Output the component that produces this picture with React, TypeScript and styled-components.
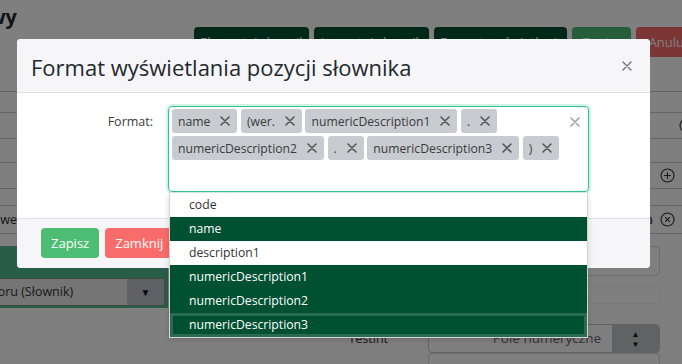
import React, { FunctionComponent, ReactElement } from 'react';
import styled, { createGlobalStyle } from 'styled-components';

const colors = {
  brand: '#005032',
  brandFocus: '#2b6b51',
  success: '#4dbd74',
  danger: '#f86c6b',
  focus: '#34c38f',
  text: '#23282c',
  line: '#c8ced3',
  tag: '#c8ccd1',
  header: '#f6f6f8',
  divider: '#dfe0e3'
};

const GlobalStyle = createGlobalStyle`
  *, *::before, *::after {
    box-sizing: border-box;
  }
  html, body {
    margin: 0;
    padding: 0;
    height: 100%;
    overflow: hidden;
    background: #ffffff;
  }
  body {
    font-family: "Open Sans", "Liberation Sans", sans-serif;
    font-size: 12.5px;
    color: ${colors.text};
  }
  #root {
    height: 100%;
  }
`;

type Tone = 'brand' | 'success' | 'danger';

const toneColor = (tone: Tone): string => {
  if (tone === 'success') {
    return colors.success;
  }
  if (tone === 'danger') {
    return colors.danger;
  }
  return colors.brand;
};

// ---------- page behind the dialog ----------

const Page = styled.div`
  width: 800px;
  margin-left: -60px;
  padding-right: 40px;
`;

const Header = styled.header`
  display: flex;
  align-items: flex-start;
  height: 57px;
  padding-top: 5px;
`;

const TitleSlot = styled.div`
  width: 77px;
  display: flex;
  justify-content: flex-end;
  white-space: nowrap;
`;

const PageTitle = styled.h2`
  margin: 0;
  font-size: 20px;
  font-weight: 700;
  line-height: 24px;
`;

const Toolbar = styled.div`
  display: flex;
  gap: 5px;
  margin-left: auto;
  margin-top: 22px;
`;

const PageButton = styled.button<{ $tone: Tone; $width: number }>`
  width: ${({ $width }): number => $width}px;
  height: 30px;
  border: 0;
  border-radius: 4px;
  background: ${({ $tone }): string => toneColor($tone)};
  color: #ffffff;
  font-family: "Open Sans", sans-serif;
  font-size: 13px;
  white-space: nowrap;
  overflow: hidden;
`;

const Table = styled.div`
  margin-top: 34px;
  border-bottom: 1px solid ${colors.line};
`;

const TableRow = styled.div<{ $height: number }>`
  display: grid;
  grid-template-columns: 77px 1fr 22px 16px;
  align-items: center;
  height: ${({ $height }): number => $height}px;
  padding-right: 6px;
  border-top: 1px solid ${colors.line};
`;

const RowLabel = styled.div`
  display: flex;
  justify-content: flex-end;
  white-space: nowrap;
`;

const RowValue = styled.div`
  text-align: right;
  white-space: nowrap;
  padding-right: 3px;
`;

const IconCell = styled.div`
  display: flex;
  justify-content: center;
  align-items: center;
`;

const Bottom = styled.div`
  display: flex;
  margin-top: 12px;
`;

const SidePanel = styled.div`
  width: 228px;
  height: 62px;
  padding: 32px 3px 2px 0;
  background: #50bc90;
`;

const TypeSelect = styled.div`
  display: flex;
  height: 28px;
  border: 1px solid #8c8c8c;
  border-radius: 4px;
  background: #ebebeb;
  overflow: hidden;
`;

const TypeSelectText = styled.div`
  flex: 1;
  padding-left: 9px;
  line-height: 26px;
  white-space: nowrap;
  color: #333333;
`;

const TypeSelectArrow = styled.div`
  width: 37px;
  display: flex;
  justify-content: center;
  align-items: center;
  background: #bfc3c8;
  font-size: 10px;
  color: #111111;
`;

const FieldColumn = styled.div`
  display: flex;
  flex-direction: column;
`;

const FieldLine = styled.div<{ $offset: number }>`
  display: grid;
  grid-template-columns: 220px 232px;
  column-gap: 40px;
  align-items: center;
  margin-top: ${({ $offset }): number => $offset}px;
`;

const FieldLabel = styled.div`
  text-align: right;
  color: #333333;
`;

const FieldBox = styled.div<{ $height: number; $faint?: boolean }>`
  height: ${({ $height }): number => $height}px;
  border: 1px solid ${({ $faint }): string => ($faint ? '#f0f0f0' : '#d8d8d8')};
  border-radius: 4px;
`;

const NumberInput = styled.div`
  display: flex;
  height: 29px;
  border: 1px solid #c4c4c4;
  border-radius: 4px;
  overflow: hidden;
`;

const NumberText = styled.div`
  flex: 1;
  text-align: right;
  padding-right: 11px;
  line-height: 27px;
  color: #6a6a6a;
  font-size: 13.5px;
`;

const Spinner = styled.div`
  width: 47px;
  display: flex;
  flex-direction: column;
  justify-content: center;
  align-items: center;
  background: #c0c4c8;
  font-size: 8px;
  line-height: 10px;
  color: #111111;
`;

const CircleIcon: FunctionComponent<{ kind: 'plus' | 'cross' }> = function ({ kind }): ReactElement {
  return (
    <svg width='15' height='15' viewBox='0 0 15 15'>
      <circle cx='7.5' cy='7.5' r='6.5' fill='none' stroke='#333' strokeWidth='1.1' />
      { kind === 'plus' ?
        <path d='M7.5 4.2V10.8M4.2 7.5H10.8' stroke='#333' strokeWidth='1.1' /> :
        <path d='M5.2 5.2L9.8 9.8M9.8 5.2L5.2 9.8' stroke='#333' strokeWidth='1.1' /> }
    </svg>
  );
};

const BackgroundPage: FunctionComponent = function (): ReactElement {
  return (
    <Page>
      <Header>
        <TitleSlot>
          <PageTitle>Słownik nowy</PageTitle>
        </TitleSlot>
        <Toolbar>
          <PageButton $tone='brand' $width={ 115 }>Eksportuj słownik</PageButton>
          <PageButton $tone='brand' $width={ 115 }>Importuj słownik</PageButton>
          <PageButton $tone='brand' $width={ 133 }>Format wyświetlania</PageButton>
          <PageButton $tone='success' $width={ 59 }>Zapisz</PageButton>
          <PageButton $tone='danger' $width={ 64 }>Anuluj</PageButton>
        </Toolbar>
      </Header>

      <Table>
        <TableRow $height={ 21 }>
          <RowLabel />
          <RowValue />
          <IconCell />
          <IconCell />
        </TableRow>
        <TableRow $height={ 26 }>
          <RowLabel />
          <RowValue />
          <IconCell />
          <IconCell><CircleIcon kind='plus' /></IconCell>
        </TableRow>
        <TableRow $height={ 24 }>
          <RowLabel />
          <RowValue />
          <IconCell />
          <IconCell />
        </TableRow>
        <TableRow $height={ 26 }>
          <RowLabel />
          <RowValue />
          <IconCell><CircleIcon kind='plus' /></IconCell>
          <IconCell />
        </TableRow>
        <TableRow $height={ 17 }>
          <RowLabel />
          <RowValue />
          <IconCell />
          <IconCell />
        </TableRow>
        <TableRow $height={ 28 }>
          <RowLabel>Pole tekstowe</RowLabel>
          <RowValue>Wymagana</RowValue>
          <IconCell><CircleIcon kind='cross' /></IconCell>
          <IconCell />
        </TableRow>
      </Table>

      <Bottom>
        <SidePanel>
          <TypeSelect>
            <TypeSelectText>Typ wyboru (Słownik)</TypeSelectText>
            <TypeSelectArrow>▼</TypeSelectArrow>
          </TypeSelect>
        </SidePanel>
        <FieldColumn>
          <FieldLine $offset={ 0 }>
            <FieldLabel />
            <FieldBox $height={ 30 } />
          </FieldLine>
          <FieldLine $offset={ 10 }>
            <FieldLabel />
            <FieldBox $height={ 18 } $faint={ true } />
          </FieldLine>
          <FieldLine $offset={ 20 }>
            <FieldLabel>Testint</FieldLabel>
            <NumberInput>
              <NumberText>Pole numeryczne</NumberText>
              <Spinner>
                <span>▲</span>
                <span>▼</span>
              </Spinner>
            </NumberInput>
          </FieldLine>
          <FieldLine $offset={ 0 }>
            <FieldLabel />
            <FieldBox $height={ 30 } />
          </FieldLine>
        </FieldColumn>
      </Bottom>
    </Page>
  );
};

// ---------- dialog ----------

const Backdrop = styled.div`
  position: fixed;
  inset: 0;
  display: flex;
  justify-content: center;
  align-items: flex-start;
  padding-right: 15px;
  background: rgba(0, 0, 0, 0.5);
`;

const Dialog = styled.div`
  width: 633px;
  margin-top: 39px;
  background: #ffffff;
  border-radius: 4px;
`;

const DialogHeader = styled.div`
  display: flex;
  justify-content: space-between;
  align-items: center;
  height: 54px;
  padding: 0 18px 0 14px;
  background: ${colors.header};
  border-bottom: 1px solid ${colors.divider};
  border-radius: 4px 4px 0 0;
`;

const DialogTitle = styled.h5`
  margin: 0;
  font-size: 22px;
  font-weight: 400;
  line-height: 28px;
  padding-top: 3px;
  color: ${colors.text};
`;

const CloseButton = styled.button`
  display: flex;
  padding: 0;
  border: 0;
  background: none;
`;

const DialogBody = styled.div`
  padding: 13px 16px 26px;
`;

const FormRow = styled.div`
  display: grid;
  grid-template-columns: 135px 421px;
  align-items: start;
`;

const FormLabel = styled.label`
  padding: 6px 15px 0 0;
  line-height: 20px;
  text-align: right;
  color: #3c3c3c;
`;

const SelectControl = styled.div`
  position: relative;
  display: flex;
  align-items: flex-start;
  min-height: 86px;
  border: 1px solid ${colors.focus};
  border-radius: 4px;
  box-shadow: 0 0 0 2px rgba(52, 195, 143, 0.22);
`;

const SelectValues = styled.div`
  flex: 1;
  display: flex;
  flex-wrap: wrap;
  align-content: flex-start;
  gap: 3px 3.5px;
  padding: 2px 0 2px 3px;
`;

const Tag = styled.div`
  display: flex;
  align-items: center;
  height: 24px;
  border-radius: 3px;
  background: ${colors.tag};
  color: #3b3b3b;
  font-size: 12.2px;
  white-space: nowrap;
`;

const TagLabel = styled.span`
  padding-left: 6px;
`;

const TagRemove = styled.span`
  display: flex;
  padding: 0 7px 0 10px;
`;

const ClearIndicator = styled.div`
  display: flex;
  width: 22px;
  padding: 10px 8px 0 4px;
`;

const Menu = styled.div`
  position: absolute;
  top: calc(100% + 2px);
  left: 0;
  right: 0;
  background: #ffffff;
  border: 1px solid #d4d4d4;
  border-top: 0;
  box-shadow: 0 2px 6px rgba(0, 0, 0, 0.15);
  z-index: 2;
`;

const MenuItem = styled.div<{ $selected?: boolean; $focused?: boolean }>`
  height: 24px;
  padding-left: 19px;
  line-height: 24px;
  font-size: 12.2px;
  background: ${({ $selected }): string => ($selected ? colors.brand : '#ffffff')};
  color: ${({ $selected }): string => ($selected ? '#ffffff' : '#333333')};
  box-shadow: ${({ $focused }): string => ($focused ? `inset 0 0 0 3px ${colors.brandFocus}` : 'none')};
`;

const DialogFooter = styled.div`
  display: flex;
  gap: 6px;
  padding: 9px 24px 10px;
  background: ${colors.header};
  border-top: 1px solid ${colors.divider};
  border-radius: 0 0 4px 4px;
`;

const FooterButton = styled.button<{ $tone: Tone }>`
  height: 30px;
  padding: 0 10px;
  border: 0;
  border-radius: 4px;
  background: ${({ $tone }): string => toneColor($tone)};
  color: #ffffff;
  font-family: "Open Sans", sans-serif;
  font-size: 13px;
`;

const CrossIcon: FunctionComponent<{ size: number; color: string; weight: number }> =
  function ({ size, color, weight }): ReactElement {
    return (
      <svg width={ size } height={ size } viewBox='0 0 10 10'>
        <path d='M1 1L9 9M9 1L1 9' stroke={ color } strokeWidth={ weight } strokeLinecap='round' />
      </svg>
    );
  };

interface Option {
  label: string;
  selected: boolean;
}

const tags = [ 'name', '(wer.', 'numericDescription1', '.', 'numericDescription2', '.', 'numericDescription3', ')' ];

const options: Option[] = [
  { label: 'code', selected: false },
  { label: 'name', selected: true },
  { label: 'description1', selected: false },
  { label: 'numericDescription1', selected: true },
  { label: 'numericDescription2', selected: true },
  { label: 'numericDescription3', selected: true }
];

const FormatDialog: FunctionComponent = function (): ReactElement {
  return (
    <Backdrop>
      <Dialog>
        <DialogHeader>
          <DialogTitle>Format wyświetlania pozycji słownika</DialogTitle>
          <CloseButton aria-label='Zamknij'>
            <CrossIcon size={ 10 } color='#6f6f6f' weight={ 1.3 } />
          </CloseButton>
        </DialogHeader>

        <DialogBody>
          <FormRow>
            <FormLabel>Format:</FormLabel>
            <SelectControl>
              <SelectValues>
                { tags.map((tag, index): ReactElement => (
                  <Tag key={ index }>
                    <TagLabel>{ tag }</TagLabel>
                    <TagRemove>
                      <CrossIcon size={ 10 } color='#555' weight={ 1.6 } />
                    </TagRemove>
                  </Tag>
                )) }
              </SelectValues>
              <ClearIndicator>
                <CrossIcon size={ 10 } color='#9a9a9a' weight={ 1.4 } />
              </ClearIndicator>
              <Menu>
                { options.map((option, index): ReactElement => (
                  <MenuItem
                    key={ option.label }
                    $selected={ option.selected }
                    $focused={ index === options.length - 1 }
                  >
                    { option.label }
                  </MenuItem>
                )) }
              </Menu>
            </SelectControl>
          </FormRow>
        </DialogBody>

        <DialogFooter>
          <FooterButton $tone='success'>Zapisz</FooterButton>
          <FooterButton $tone='danger'>Zamknij</FooterButton>
        </DialogFooter>
      </Dialog>
    </Backdrop>
  );
};

const App: FunctionComponent = function (): ReactElement {
  return (
    <>
      <GlobalStyle />
      <BackgroundPage />
      <FormatDialog />
    </>
  );
};

export default App;
